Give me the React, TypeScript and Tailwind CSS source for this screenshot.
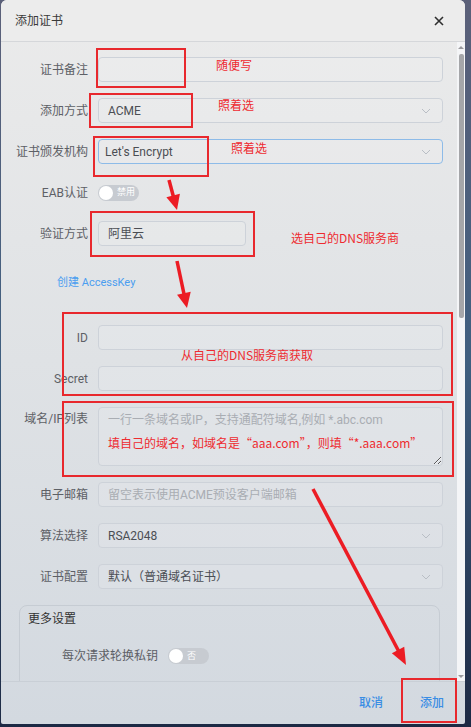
import type { ReactNode } from 'react'

const FONT = { fontFamily: 'Roboto, "Noto Sans CJK SC", sans-serif' }
const NOTE_FONT = { fontFamily: '"Noto Sans CJK SC", "Noto Sans", sans-serif' }

function Chevron() {
  return (
    <svg width="10" height="6" viewBox="0 0 10 6" className="shrink-0">
      <path d="M1 1l4 4 4-4" fill="none" stroke="#b9bec5" strokeWidth="1" />
    </svg>
  )
}

function Row({ label, children, className = '' }: { label: string; children: ReactNode; className?: string }) {
  return (
    <div className={`flex h-[25px] items-center ${className}`}>
      <div className="w-[87px] shrink-0 whitespace-nowrap text-right text-[12px] text-[#5d6066]">{label}</div>
      <div className="ml-[10px] w-[345px]">{children}</div>
    </div>
  )
}

function TextBox({ value, placeholder, select, focus }: { value?: string; placeholder?: string; select?: boolean; focus?: boolean }) {
  return (
    <div
      className={`flex h-[25px] items-center justify-between rounded-[4px] border bg-white/10 pr-[11px] text-[12px] ${
        focus ? 'border-[#8dbbe8] pl-[6px]' : 'border-[#cdd2d9] pl-[9px]'
      }`}
    >
      {value ? <span className="text-[#4b4e54]">{value}</span> : <span className="text-[#a9adb3]">{placeholder}</span>}
      {select && <Chevron />}
    </div>
  )
}

function Toggle({ text }: { text: string }) {
  return (
    <div className="flex h-[16px] w-[41px] items-center rounded-full bg-[#c7cbd1] pl-[1px]">
      <div className="h-[14px] w-[14px] rounded-full bg-white" />
      <span className="ml-[4px] text-[9px] leading-none text-white">{text}</span>
    </div>
  )
}

function arrow(x1: number, y1: number, x2: number, y2: number, len = 15, half = 7) {
  const dx = x2 - x1
  const dy = y2 - y1
  const d = Math.hypot(dx, dy)
  const ux = dx / d
  const uy = dy / d
  const bx = x2 - ux * len
  const by = y2 - uy * len
  const px = -uy * half
  const py = ux * half
  return {
    line: { x1, y1, x2: bx + ux * 2, y2: by + uy * 2 },
    head: `${x2},${y2} ${bx + px},${by + py} ${bx - px},${by - py}`,
  }
}

const arrows = [arrow(169, 180, 177, 210), arrow(177, 261, 187, 308), arrow(313, 489, 406, 665, 17, 7)]

const boxes = [
  { x: 97, y: 49, w: 88, h: 38 },
  { x: 90, y: 94, w: 102, h: 33 },
  { x: 94, y: 137, w: 114, h: 39 },
  { x: 91, y: 212, w: 163, h: 44 },
  { x: 63, y: 313, w: 389, h: 82 },
  { x: 63, y: 402, w: 390, h: 74 },
  { x: 402, y: 679, w: 54, h: 43 },
]

const notes = [
  { x: 216, y: 59, t: '随便写' },
  { x: 218, y: 99, t: '照着选' },
  { x: 231, y: 142, t: '照着选' },
  { x: 291, y: 232, t: '选自己的DNS服务商' },
  { x: 181, y: 349, t: '从自己的DNS服务商获取' },
  { x: 108, y: 437, t: '填自己的域名，如域名是“aaa.com”，则填“*.aaa.com”' },
]

export default function App() {
  return (
    <div
      style={FONT}
      className="relative h-[727px] w-[471px] overflow-hidden bg-gradient-to-b from-[#5b6079] via-[#3f5f80] to-[#1c2944]"
    >
      <div className="ml-[1px] flex h-[724px] w-[464px] flex-col overflow-hidden rounded-t-[6px] rounded-b-[2px] bg-gradient-to-b from-[#ebebeb] via-[#dfe2e5] to-[#d3d9e0]">
        {/* header */}
        <div className="flex h-[42px] shrink-0 items-center justify-between border-b border-[#d5d7da] bg-[#ececec] pl-[14px] pr-[21px]">
          <span className="text-[12px] text-[#3a3a3a]">添加证书</span>
          <svg width="10" height="10" viewBox="0 0 10 10">
            <path d="M1 1l8 8M9 1l-8 8" stroke="#2f2f2f" strokeWidth="1.6" />
          </svg>
        </div>

        {/* body */}
        <div className="flex min-h-0 flex-1">
          <div className="w-[456px] overflow-hidden pt-[15px]">
            <Row label="证书备注">
              <TextBox />
            </Row>
            <Row label="添加方式" className="mt-[16px]">
              <TextBox value="ACME" select />
            </Row>
            <Row label="证书颁发机构" className="mt-[16px]">
              <TextBox value="Let's Encrypt" select focus />
            </Row>
            <Row label="EAB认证" className="mt-[16px]">
              <Toggle text="禁用" />
            </Row>
            <div className="mt-[16px] flex h-[25px] items-center">
              <div className="w-[87px] shrink-0 text-right text-[12px] text-[#5d6066]">验证方式</div>
              <div className="ml-[10px] w-[148px]">
                <TextBox value="阿里云" />
              </div>
            </div>
            <div className="mt-[29px] h-[16px] pl-[56px] text-[11px] leading-[16px] text-[#4b9ef0]">创建 AccessKey</div>
            <Row label="ID" className="mt-[34px]">
              <TextBox />
            </Row>
            <Row label="Secret" className="mt-[16px]">
              <TextBox />
            </Row>
            <div className="mt-[16px] flex">
              <div className="w-[87px] shrink-0 pt-[4px] text-right text-[12px] leading-[17px] text-[#5d6066]">域名/IP列表</div>
              <textarea
                className="ml-[10px] h-[59px] w-[345px] rounded-[4px] border border-[#cdd2d9] bg-white/10 px-[9px] pt-[3px] text-[12px] leading-[18px] text-[#4b4e54] outline-none placeholder:text-[#a9adb3]"
                placeholder="一行一条域名或IP，支持通配符域名,例如 *.abc.com"
              />
            </div>
            <Row label="电子邮箱" className="mt-[16px]">
              <TextBox placeholder="留空表示使用ACME预设客户端邮箱" />
            </Row>
            <Row label="算法选择" className="mt-[16px]">
              <TextBox value="RSA2048" select />
            </Row>
            <Row label="证书配置" className="mt-[16px]">
              <TextBox value="默认（普通域名证书）" select />
            </Row>
            <div className="ml-[18px] mt-[16px] h-[120px] w-[421px] rounded-[8px] border border-[#c6ccd3] pl-[8px] pt-[5px]">
              <div className="text-[12px] leading-[16px] text-[#333]">更多设置</div>
              <div className="mt-[20px] flex items-center">
                <span className="w-[130px] text-right text-[12px] text-[#5d6066]">每次请求轮换私钥</span>
                <div className="ml-[10px]">
                  <Toggle text="否" />
                </div>
              </div>
            </div>
          </div>
          {/* scrollbar */}
          <div className="flex w-[8px] flex-col items-center bg-[#f4f5f7] pt-[4px]">
            <div className="h-0 w-0 border-x-[3px] border-b-[3px] border-x-transparent border-b-[#9a9a9e]" />
            <div className="mt-[5px] h-[264px] w-[5px] rounded-[2px] bg-[#a5a6a9]" />
            <div className="flex-1" />
            <div className="mb-[3px] h-0 w-0 border-x-[3px] border-t-[3px] border-x-transparent border-t-[#9a9a9e]" />
          </div>
        </div>

        {/* footer */}
        <div className="flex h-[43px] shrink-0 items-center justify-end gap-[37px] border-t border-[#c9cfd6] pr-[21px] text-[12px] font-medium text-[#3a8de4]">
          <span>取消</span>
          <span>添加</span>
        </div>
      </div>

      {/* annotations */}
      <svg className="pointer-events-none absolute inset-0" width="471" height="727">
        {boxes.map((b, i) => (
          <rect key={i} x={b.x} y={b.y} width={b.w} height={b.h} fill="none" stroke="#e8282d" strokeWidth="2" />
        ))}
        {arrows.map((a, i) => (
          <g key={i}>
            <line {...a.line} stroke="#ec1c24" strokeWidth="3.5" />
            <polygon points={a.head} fill="#ec1c24" />
          </g>
        ))}
      </svg>
      {notes.map((n, i) => (
        <span
          key={i}
          className="pointer-events-none absolute whitespace-nowrap text-[12px] leading-[12px] text-[#ee2b30]"
          style={{ left: n.x, top: n.y, ...NOTE_FONT }}
        >
          {n.t}
        </span>
      ))}
    </div>
  )
}
